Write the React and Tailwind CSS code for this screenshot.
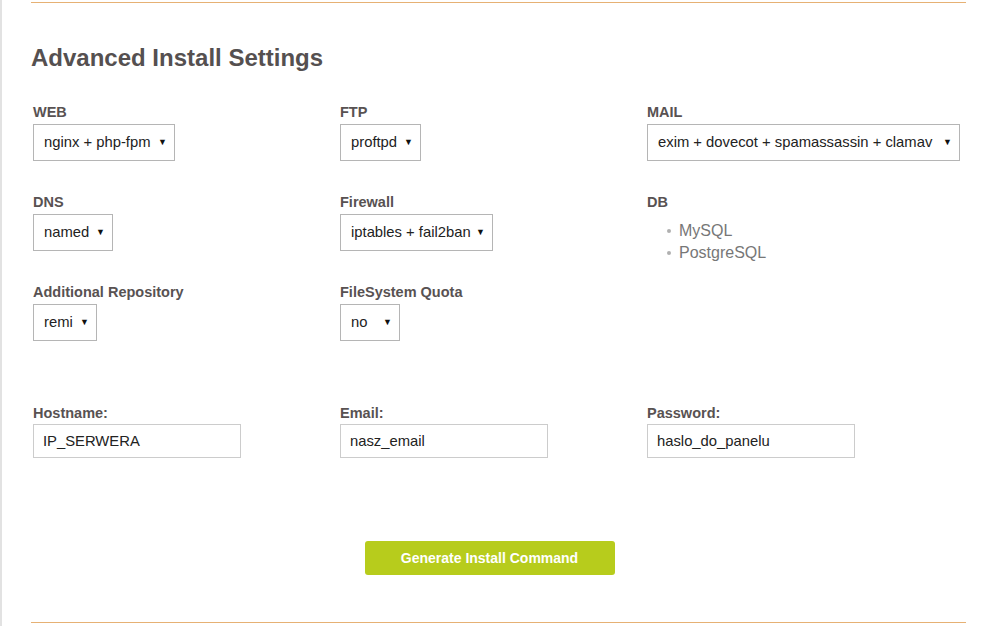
import React from "react";

const Select = ({ value, w }) => (
  <div className={`flex h-[37px] items-center justify-between border border-[#b5b5b5] bg-white pl-[10px] pr-[7px] text-[14.8px] text-[#222] ${w}`}>
    <span>{value}</span>
    <span className="text-[9px] text-[#111]">▼</span>
  </div>
);

const Field = ({ label, gap = "mb-[4px]", children }) => (
  <div className="flex flex-col">
    <div className={`${gap} h-[16px] text-[14.5px] font-bold leading-[16px] text-[#585252]`}>{label}</div>
    {children}
  </div>
);

const TextInput = ({ value }) => (
  <input
    readOnly
    value={value}
    className="h-[34px] w-[208px] border border-[#cccccc] bg-white px-[9px] text-[14.8px] text-[#222] outline-none"
  />
);

export default function App() {
  return (
    <div className="h-[626px] w-[997px] overflow-hidden border-l-2 border-[#e2e2e2] bg-white font-['Liberation_Sans',Arial,sans-serif]">
      <div className="ml-[29px] w-[935px]">
        <div className="mt-[2px] h-px bg-[#e6b174]" />
        <h2 className="mt-[42px] text-[24px] font-bold leading-[26px] text-[#555050]">Advanced Install Settings</h2>

        <div className="ml-[2px] mt-[33px] grid grid-cols-[307px_307px_1fr] gap-y-[33px]">
          <Field label="WEB">
            <Select value="nginx + php-fpm" w="w-[142px]" />
          </Field>
          <Field label="FTP">
            <Select value="proftpd" w="w-[81px]" />
          </Field>
          <Field label="MAIL">
            <Select value="exim + dovecot + spamassassin + clamav" w="w-[313px]" />
          </Field>

          <Field label="DNS">
            <Select value="named" w="w-[80px]" />
          </Field>
          <Field label="Firewall">
            <Select value="iptables + fail2ban" w="w-[153px]" />
          </Field>
          <Field label="DB">
            <div className="h-[37px]">
              <ul className="ml-[20px] mt-[6px] text-[16px] leading-[22px] text-[#777]">
                <li className="flex items-center gap-[8px]">
                  <span className="h-[4px] w-[4px] rounded-full bg-[#b0b0b0]" />MySQL
                </li>
                <li className="flex items-center gap-[8px]">
                  <span className="h-[4px] w-[4px] rounded-full bg-[#b0b0b0]" />PostgreSQL
                </li>
              </ul>
            </div>
          </Field>

          <Field label="Additional Repository">
            <Select value="remi" w="w-[64px]" />
          </Field>
          <Field label="FileSystem Quota">
            <Select value="no" w="w-[60px]" />
          </Field>
          <div />

          <div className="col-span-3 mt-[31px] grid grid-cols-[307px_307px_1fr]">
            <Field label="Hostname:" gap="mb-[3px]">
              <TextInput value="IP_SERWERA" />
            </Field>
            <Field label="Email:" gap="mb-[3px]">
              <TextInput value="nasz_email" />
            </Field>
            <Field label="Password:" gap="mb-[3px]">
              <TextInput value="haslo_do_panelu" />
            </Field>
          </div>
        </div>

        <div className="mt-[83px] flex justify-center pr-[18px]">
          <button className="h-[34px] w-[250px] rounded-[3px] bg-[#b7cc1c] text-[14px] font-bold text-white">
            Generate Install Command
          </button>
        </div>

        <div className="mt-[47px] h-px bg-[#e6b174]" />
      </div>
    </div>
  );
}
